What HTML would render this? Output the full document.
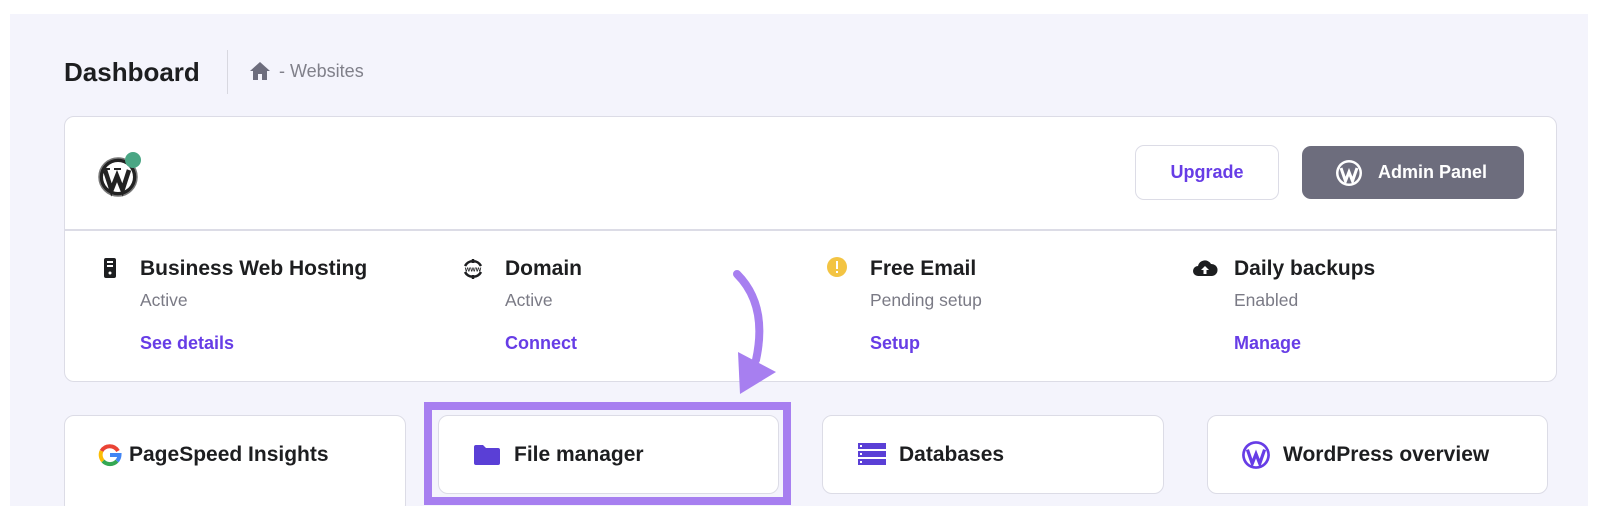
<!DOCTYPE html>
<html><head><style>
body{margin:0;width:1600px;height:527px;background:#fff;font-family:"Liberation Sans",sans-serif;position:relative;overflow:hidden}
.bg{position:absolute;left:10px;top:14px;width:1578px;height:492px;background:#f4f4fc}
.a{position:absolute}
.card{position:absolute;background:#fff;border:1.5px solid #dcdce6;border-radius:10px;box-sizing:border-box}
.t{font-weight:bold;color:#1d1e20;font-size:21px}
.s{color:#7a7a85;font-size:17.5px}
.l{color:#673de6;font-weight:bold;font-size:18px}
</style></head><body>
<div class="bg"></div>
<div class="a t" style="left:64px;top:57px;font-size:26px">Dashboard</div>
<div class="a" style="left:227px;top:50px;width:1px;height:44px;background:#d8d8e0"></div>
<svg class="a" style="left:249px;top:61px" width="22" height="20" viewBox="0 0 22 20"><path d="M11 1 L21 10 H18 V19 H13 V13 H9 V19 H4 V10 H1 Z" fill="#6d6d7d"/></svg>
<div class="a s" style="left:279px;top:61px;font-size:18px;color:#80808a">- Websites</div>
<div class="card" style="left:64px;top:116px;width:1493px;height:266px"></div>
<div class="a" style="left:65px;top:229px;width:1491px;height:1.5px;background:#dcdce6"></div>
<svg class="a" style="left:97px;top:150px" width="48" height="50" viewBox="0 0 48 50"><circle cx="21" cy="27" r="19" fill="#222" stroke="#777" stroke-width="1.5"/><circle cx="21" cy="27" r="15" fill="#fff"/><path d="M8 20 L14.5 40 L20 26 L25.5 40 L32 20" stroke="#222" stroke-width="4.5" fill="none"/><path d="M6 19 H13 M17 19 H24" stroke="#222" stroke-width="2"/><circle cx="36" cy="10" r="8" fill="#4aa684"/></svg>
<div class="a" style="left:1135px;top:145px;width:144px;height:55px;border:1.5px solid #dcdce6;border-radius:9px;box-sizing:border-box;color:#673de6;font-weight:bold;font-size:18px;text-align:center;line-height:52px">Upgrade</div>
<div class="a" style="left:1302px;top:146px;width:222px;height:53px;background:#6d6d7d;border-radius:9px;color:#fff;font-weight:bold;font-size:18px;line-height:53px;padding-left:76px;box-sizing:border-box">Admin Panel</div>
<svg class="a" style="left:1335px;top:159px" width="28" height="28" viewBox="0 0 28 28"><circle cx="14" cy="14" r="13" fill="#fff"/><circle cx="14" cy="14" r="10.5" fill="#6d6d7d"/><path d="M6 9 L10.5 22 L14 13 L17.5 22 L22 9" stroke="#fff" stroke-width="3" fill="none"/></svg>
<!-- items -->
<svg class="a" style="left:103px;top:257px" width="14" height="22" viewBox="0 0 14 22"><rect x="1" y="1" width="12" height="20" rx="2" fill="#1d1e20"/><rect x="4" y="4" width="6" height="2" fill="#fff"/><rect x="4" y="8" width="6" height="2" fill="#fff"/><circle cx="7" cy="16" r="1.5" fill="#fff"/></svg>
<div class="a t" style="left:140px;top:257px">Business Web Hosting</div>
<div class="a s" style="left:140px;top:290px">Active</div>
<div class="a l" style="left:140px;top:333px">See details</div>
<svg class="a" style="left:462px;top:258px" width="22" height="22" viewBox="0 0 22 22"><path d="M3 8 A9 9 0 0 1 19 8 M3 14 A9 9 0 0 0 19 14 M11 1 V5 M11 17 V21" stroke="#1d1e20" stroke-width="2.5" fill="none"/><text x="11" y="13.5" font-size="7" font-weight="bold" text-anchor="middle" fill="#1d1e20" font-family="Liberation Sans">www</text></svg>
<div class="a t" style="left:505px;top:257px">Domain</div>
<div class="a s" style="left:505px;top:290px">Active</div>
<div class="a l" style="left:505px;top:333px">Connect</div>
<svg class="a" style="left:826px;top:256px" width="22" height="22"><circle cx="11" cy="11" r="10" fill="#f3c443"/><rect x="10" y="5" width="2" height="8" fill="#fff"/><rect x="10" y="15" width="2" height="2" fill="#fff"/></svg>
<div class="a t" style="left:870px;top:257px">Free Email</div>
<div class="a s" style="left:870px;top:290px">Pending setup</div>
<div class="a l" style="left:870px;top:333px">Setup</div>
<svg class="a" style="left:1192px;top:258px" width="26" height="20" viewBox="0 0 26 20"><path d="M6 18 A5 5 0 0 1 6 8 A7 7 0 0 1 19 6 A6 6 0 0 1 20 18 Z" fill="#1d1e20"/><path d="M13 8 L9 12 H11.5 V16 H14.5 V12 H17 Z" fill="#fff"/></svg>
<div class="a t" style="left:1234px;top:257px">Daily backups</div>
<div class="a s" style="left:1234px;top:290px">Enabled</div>
<div class="a l" style="left:1234px;top:333px">Manage</div>
<!-- bottom cards -->
<div class="card" style="left:64px;top:415px;width:342px;height:100px"></div>
<div class="card" style="left:438px;top:415px;width:341px;height:79px"></div>
<div class="card" style="left:822px;top:415px;width:342px;height:79px"></div>
<div class="card" style="left:1207px;top:415px;width:341px;height:79px"></div>
<div class="a" style="left:0;top:506px;width:1600px;height:21px;background:#fff"></div>
<div class="a" style="left:424px;top:402px;width:367px;height:103px;border:8px solid #a77ff0;box-sizing:border-box"></div>
<svg class="a" style="left:98px;top:443px" width="24" height="24" viewBox="0 0 24 24"><path d="M20 8 A9.5 9.5 0 0 0 3.5 8" stroke="#ea4335" stroke-width="4" fill="none"/><path d="M3.5 8 A9.5 9.5 0 0 0 5 18" stroke="#fbbc05" stroke-width="4" fill="none"/><path d="M5 18 A9.5 9.5 0 0 0 19 18" stroke="#34a853" stroke-width="4" fill="none"/><path d="M19 18 A9.5 9.5 0 0 0 21.5 12 H12" stroke="#4285f4" stroke-width="4" fill="none"/></svg>
<div class="a t" style="left:129px;top:443px">PageSpeed Insights</div>
<svg class="a" style="left:473px;top:444px" width="28" height="22"><path d="M1 3 Q1 1 3 1 H10 L13 4 H25 Q27 4 27 6 V19 Q27 21 25 21 H3 Q1 21 1 19 Z" fill="#5a3fd6"/></svg>
<div class="a t" style="left:514px;top:443px">File manager</div>
<svg class="a" style="left:857px;top:441px" width="30" height="26"><rect x="1" y="2" width="28" height="6" fill="#5a3fd6"/><rect x="1" y="10" width="28" height="6" fill="#5a3fd6"/><rect x="1" y="18" width="28" height="6" fill="#5a3fd6"/><rect x="3" y="4" width="2" height="2" fill="#fff"/><rect x="3" y="12" width="2" height="2" fill="#fff"/><rect x="3" y="20" width="2" height="2" fill="#fff"/></svg>
<div class="a t" style="left:899px;top:443px">Databases</div>
<svg class="a" style="left:1241px;top:440px" width="30" height="30" viewBox="0 0 28 28"><circle cx="14" cy="14" r="13" fill="#673de6"/><circle cx="14" cy="14" r="10.5" fill="#fff"/><path d="M6 9 L10.5 22 L14 13 L17.5 22 L22 9" stroke="#673de6" stroke-width="3" fill="none"/></svg>
<div class="a t" style="left:1283px;top:443px">WordPress overview</div>
<svg class="a" style="left:700px;top:260px" width="100" height="140"><path d="M37 14 Q68 45 56 100" stroke="#a77ff0" stroke-width="8" fill="none" stroke-linecap="round"/><path d="M38 92 L76 112 L40 134 Z" fill="#a77ff0"/></svg>
</body></html>
